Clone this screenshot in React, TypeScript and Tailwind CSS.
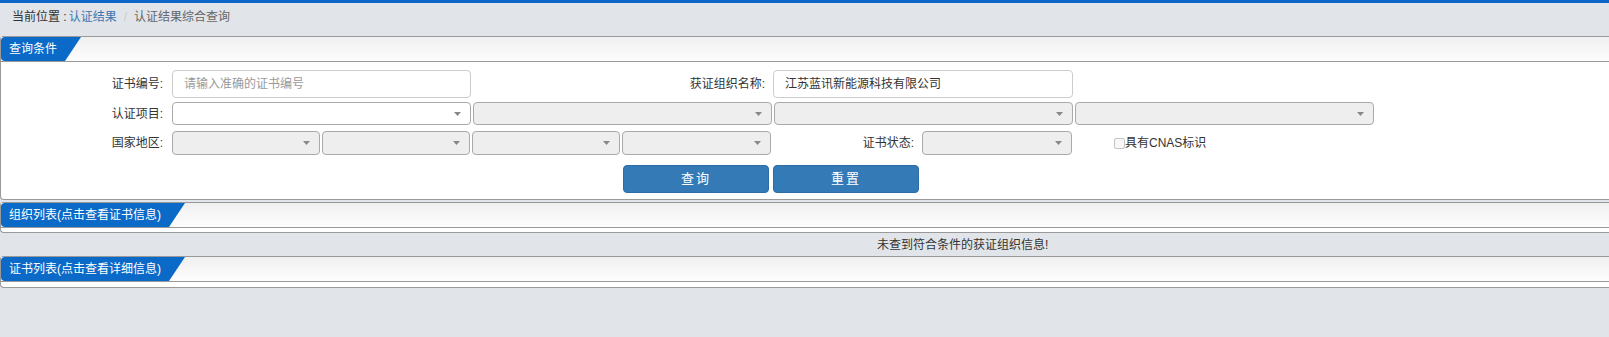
import React from "react";

function Caret() {
  return (
    <svg width={7} height={4} viewBox="0 0 7 4" className="absolute right-[9px] top-1/2 -translate-y-1/2">
      <path d="M0 0H7L3.5 4Z" fill="#888" />
    </svg>
  );
}

function SelectBox({ w, disabled = true }: { w: string; disabled?: boolean }) {
  return (
    <div
      className={`relative h-full rounded-[4px] border border-[#aaa] ${w} ${disabled ? "bg-[#eeeeee]" : "bg-white"}`}
    >
      <Caret />
    </div>
  );
}

function PanelHead({ title }: { title: string }) {
  return (
    <div className="h-[25px] border-b border-[#999] bg-linear-to-b from-[#f0f0f0] to-[#fdfdfd] flex">
      <div className="h-[24px] pl-[8px] pr-[24px] bg-[#0b69c7] rounded-tl-[4px] rounded-bl-[4px] text-white text-[12px] leading-[24px] [clip-path:polygon(0_0,100%_0,calc(100%-16px)_100%,0_100%)]">
        {title}
      </div>
    </div>
  );
}

export default function App() {
  return (
    <div className="min-h-[337px] bg-[#e1e5e9] border-t-[3px] border-[#0d66c8] font-['Liberation_Sans','Noto_Sans_CJK_SC',sans-serif] text-[12px] text-[#333]">
      <div className="h-[33px] flex items-start pt-[6px] leading-[17px] pl-[12px]">
        <span>当前位置 : </span>
        <span className="ml-[2px] text-[#3b77b3]">认证结果</span>
        <span className="mx-[7px] text-[#c8c8c8]">/</span>
        <span className="text-[#666]">认证结果综合查询</span>
      </div>

      <div className="border border-r-0 border-[#999] rounded-l-[4px] bg-white">
        <PanelHead title="查询条件" />
        <div className="pt-[8px] pb-[6px]">
          <div className="flex h-[28px] items-center">
            <div className="w-[171px] pr-[9px] text-right">证书编号:</div>
            <div className="w-[299px] h-full rounded-[4px] border border-[#ccc] pl-[11px] flex items-center text-[#999]">
              请输入准确的证书编号
            </div>
            <div className="w-[302px] pr-[8px] text-right">获证组织名称:</div>
            <div className="w-[300px] h-full rounded-[4px] border border-[#ccc] pl-[11px] flex items-center">
              江苏蓝讯新能源科技有限公司
            </div>
          </div>

          <div className="flex h-[23px] items-center mt-[4px]">
            <div className="w-[171px] pr-[9px] text-right">认证项目:</div>
            <div className="flex gap-[2px] h-full">
              <SelectBox w="w-[299px]" disabled={false} />
              <SelectBox w="w-[299px]" />
              <SelectBox w="w-[299px]" />
              <SelectBox w="w-[299px]" />
            </div>
          </div>

          <div className="flex h-[24px] items-center mt-[6px]">
            <div className="w-[171px] pr-[9px] text-right">国家地区:</div>
            <div className="flex gap-[2px] h-full">
              <SelectBox w="w-[148px]" />
              <SelectBox w="w-[148px]" />
              <SelectBox w="w-[148px]" />
              <SelectBox w="w-[149px]" />
            </div>
            <div className="w-[151px] pr-[8px] text-right">证书状态:</div>
            <div className="h-full">
              <SelectBox w="w-[150px]" />
            </div>
            <div className="ml-[42px] flex items-center">
              <span className="w-[11px] h-[11px] border border-[#c4c4c4] rounded-[2px] bg-[#f7f7f7]" />
              <span>具有CNAS标识</span>
            </div>
          </div>

          <div className="flex mt-[10px] h-[28px] pl-[622px] gap-[4px]">
            <button className="w-[146px] h-full rounded-[4px] bg-[#337ab7] border border-[#2e6da4] text-white text-[13px] tracking-[2px]">
              查询
            </button>
            <button className="w-[146px] h-full rounded-[4px] bg-[#337ab7] border border-[#2e6da4] text-white text-[13px] tracking-[2px]">
              重置
            </button>
          </div>
        </div>
      </div>

      <div className="mt-[2px] border border-r-0 border-[#999] rounded-l-[4px] bg-white">
        <PanelHead title="组织列表(点击查看证书信息)" />
        <div className="h-[4px]" />
      </div>

      <div className="h-[23px] flex items-center pl-[877px]">未查到符合条件的获证组织信息!</div>

      <div className="border border-r-0 border-[#999] rounded-l-[4px] bg-white">
        <PanelHead title="证书列表(点击查看详细信息)" />
        <div className="h-[5px]" />
      </div>
    </div>
  );
}
